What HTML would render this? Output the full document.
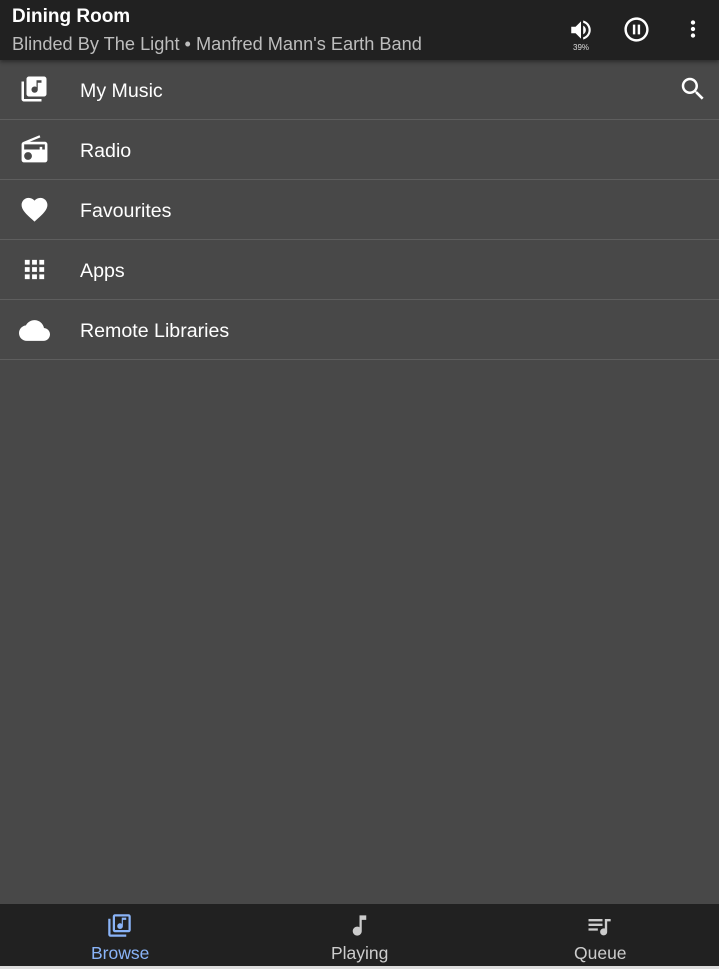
<!DOCTYPE html>
<html><head><meta charset="utf-8"><style>
*{margin:0;padding:0;box-sizing:border-box}
body{width:719px;height:969px;background:#484848;font-family:"Liberation Sans",sans-serif;position:relative;overflow:hidden;color:#fff}
.hdr{position:absolute;left:0;top:0;width:719px;height:60px;background:#212121;box-shadow:0 2px 4px rgba(0,0,0,.4);z-index:2}
.t1{position:absolute;left:12px;top:6px;font-size:19px;font-weight:bold;color:#fff}
.t2{position:absolute;left:12px;top:34px;font-size:18.2px;color:#bdbdbd}
svg{position:absolute;fill:#fff}
.row{position:absolute;left:0;width:719px;height:60px;border-bottom:1px solid #5e5e5e}
.row span{position:absolute;left:80px;top:20px;font-size:19.6px}
.nav{position:absolute;left:0;top:904px;width:719px;height:62px;background:#212121}
.nav div{position:absolute;font-size:17.5px;top:39px;color:#ccc}
.bl{position:absolute;left:0;top:966px;width:719px;height:3px;background:#ddd}
</style></head><body>
<div class="hdr">
<div class="t1">Dining Room</div>
<div class="t2">Blinded By The Light • Manfred Mann's Earth Band</div>
<svg style="left:568px;top:17px" width="26" height="26" viewBox="0 0 24 24"><path d="M3 9v6h4l5 5V4L7 9H3zm13.5 3c0-1.77-1.02-3.29-2.5-4.03v8.05c1.48-.73 2.5-2.25 2.5-4.02zM14 3.230v2.06c2.89.86 5 3.54 5 6.71s-2.11 5.85-5 6.71v2.06c4.01-.91 7-4.49 7-8.77s-2.99-7.86-7-8.77z"/></svg>
<div style="position:absolute;left:573px;top:43px;font-size:8px;color:#ddd">39%</div>
<svg style="left:622px;top:15px" width="29" height="29" viewBox="0 0 24 24"><path d="M9 16h2V8H9v8zm3-14C6.48 2 2 6.48 2 12s4.48 10 10 10 10-4.48 10-10S17.52 2 12 2zm0 18c-4.41 0-8-3.59-8-8s3.59-8 8-8 8 3.59 8 8-3.59 8-8 8zm1-4h2V8h-2v8z"/></svg>
<svg style="left:680px;top:16px" width="26" height="26" viewBox="0 0 24 24"><path d="M12 8c1.1 0 2-.9 2-2s-.9-2-2-2-2 .9-2 2 .9 2 2 2zm0 2c-1.1 0-2 .9-2 2s.9 2 2 2 2-.9 2-2-.9-2-2-2zm0 6c-1.1 0-2 .9-2 2s.9 2 2 2 2-.9 2-2-.9-2-2-2z"/></svg>
</div>
<div class="row" style="top:60px"><span>My Music</span>
<svg style="left:19px;top:14px" width="30" height="30" viewBox="0 0 24 24"><path d="M20 2H8c-1.1 0-2 .9-2 2v12c0 1.1.9 2 2 2h12c1.1 0 2-.9 2-2V4c0-1.1-.9-2-2-2zm-2 5h-3v5.5c0 1.38-1.12 2.5-2.5 2.5S10 13.88 10 12.5s1.12-2.5 2.5-2.5c.57 0 1.080.19 1.5.51V5h4v2zM4 6H2v14c0 1.1.9 2 2 2h14v-2H4V6z"/></svg>
<svg style="left:678px;top:14px" width="30" height="30" viewBox="0 0 24 24"><path d="M15.5 14h-.79l-.28-.27C15.41 12.59 16 11.11 16 9.5 16 5.91 13.09 3 9.5 3S3 5.91 3 9.5 5.91 16 9.5 16c1.61 0 3.09-.59 4.23-1.57l.27.28v.79l5 4.99L20.49 19l-4.99-5zm-6 0C7.01 14 5 11.99 5 9.5S7.01 5 9.5 5 14 7.01 14 9.5 11.99 14 9.5 14z"/></svg></div>
<div class="row" style="top:120px"><span>Radio</span>
<svg style="left:19px;top:14px" width="31" height="31" viewBox="0 0 24 24"><path d="M3.24 6.15C2.51 6.43 2 7.17 2 8v12c0 1.1.89 2 2 2h16c1.11 0 2-.9 2-2V8c0-1.11-.89-2-2-2H8.3l8.26-3.34L15.88 1 3.24 6.15zM7 20c-1.66 0-3-1.34-3-3s1.34-3 3-3 3 1.34 3 3-1.34 3-3 3zm13-8h-2v-2h-2v2H4V8h16v4z"/></svg></div>
<div class="row" style="top:180px"><span>Favourites</span>
<svg style="left:19px;top:14px" width="31" height="31" viewBox="0 0 24 24"><path d="M12 21.35l-1.45-1.32C5.4 15.36 2 12.28 2 8.5 2 5.42 4.42 3 7.5 3c1.74 0 3.41.81 4.5 2.09C13.09 3.81 14.76 3 16.5 3 19.58 3 22 5.42 22 8.5c0 3.78-3.4 6.86-8.55 11.54L12 21.35z"/></svg></div>
<div class="row" style="top:240px"><span>Apps</span>
<svg style="left:20px;top:15px" width="29" height="29" viewBox="0 0 24 24"><path d="M4 8h4V4H4v4zm6 12h4v-4h-4v4zm-6 0h4v-4H4v4zm0-6h4v-4H4v4zm6 0h4v-4h-4v4zm6-10v4h4V4h-4zm-6 4h4V4h-4v4zm6 6h4v-4h-4v4zm0 6h4v-4h-4v4z"/></svg></div>
<div class="row" style="top:300px"><span>Remote Libraries</span>
<svg style="left:19px;top:15px" width="31" height="31" viewBox="0 0 24 24"><path d="M19.35 10.04C18.67 6.59 15.64 4 12 4 9.11 4 6.6 5.64 5.35 8.04 2.34 8.36 0 10.91 0 14c0 3.31 2.69 6 6 6h13c2.76 0 5-2.24 5-5 0-2.64-2.05-4.78-4.65-4.96z"/></svg></div>
<div class="nav">
<svg style="left:106px;top:8px;fill:#8ab4f8" width="27" height="27" viewBox="0 0 24 24"><path d="M4 6H2v14c0 1.1.9 2 2 2h14v-2H4V6zm16-4H8c-1.1 0-2 .9-2 2v12c0 1.1.9 2 2 2h12c1.1 0 2-.9 2-2V4c0-1.1-.9-2-2-2zm0 14H8V4h12v12zm-7.5-1c1.38 0 2.5-1.12 2.5-2.5V7h3V5h-4v5.51c-.42-.32-.93-.51-1.5-.51-1.38 0-2.5 1.12-2.5 2.5S11.12 15 12.5 15z"/></svg>
<div style="left:91px;color:#8ab4f8">Browse</div>
<svg style="left:346px;top:8px;fill:#ccc" width="27" height="27" viewBox="0 0 24 24"><path d="M12 3v10.55c-.59-.34-1.27-.55-2-.55-2.21 0-4 1.79-4 4s1.79 4 4 4 4-1.79 4-4V7h4V3h-6z"/></svg>
<div style="left:331px">Playing</div>
<svg style="left:585px;top:8px;fill:#ccc" width="28" height="28" viewBox="0 0 24 24"><path d="M15 6H3v2h12V6zm0 4H3v2h12v-2zM3 16h8v-2H3v2zM17 6v8.18c-.31-.11-.65-.18-1-.18-1.66 0-3 1.34-3 3s1.34 3 3 3 3-1.34 3-3V8h3V6h-5z"/></svg>
<div style="left:574px">Queue</div>
</div>
<div class="bl"></div>
</body></html>
